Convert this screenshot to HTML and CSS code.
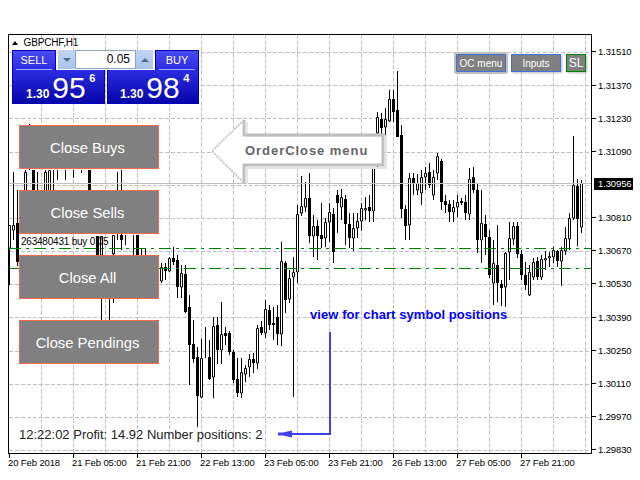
FILE: index.html
```html
<!DOCTYPE html>
<html lang="en">
<head>
<meta charset="utf-8">
<title>GBPCHF,H1</title>
<link rel="stylesheet" href="styles.css">
</head>
<body>
<div class="page">
  <div class="chart-row">
    <div class="plot">
      <svg class="chart" width="582" height="418" viewBox="9 35 582 418">
        <path class="grid" d="M9 52.5H591M9 85.5H591M9 118.5H591M9 152.5H591M9 185.5H591M9 218.5H591M9 251.5H591M9 284.5H591M9 317.5H591M9 351.5H591M9 384.5H591M9 417.5H591M9 450.5H591M41.5 35V453M73.5 35V453M105.5 35V453M137.5 35V453M169.5 35V453M201.5 35V453M233.5 35V453M265.5 35V453M297.5 35V453M329.5 35V453M361.5 35V453M393.5 35V453M425.5 35V453M457.5 35V453M489.5 35V453M521.5 35V453M553.5 35V453M585.5 35V453"/>
        <path class="wick" d="M9.5 225V285M13.5 172V240M17.5 190V266M25.5 170V205M29.5 124V170M33.5 170V200M37.5 172V195M45.5 170V205M49.5 170V205M53.5 170V195M57.5 170V180M65.5 170V180M73.5 170V178M81.5 170V173M89.5 170V200M97.5 240V256M101.5 240V320M109.5 255V320M113.5 235V303M117.5 172V240M121.5 170V250M125.5 235V245M133.5 235V256M137.5 235V256M141.5 249V256M145.5 248V256M161.5 263V283M165.5 263V280M169.5 257V272M173.5 247V265M177.5 255V298M181.5 265V298M185.5 265V313M189.5 295V385M193.5 320V363M197.5 347V427M201.5 339V398M205.5 327V358M209.5 340V380M213.5 317V398M217.5 317V364M221.5 302V364M225.5 327V345M229.5 331V355M233.5 350V383M237.5 358V397M241.5 358V398M245.5 365V382M249.5 354V377M253.5 353V373M257.5 325V369M261.5 321V335M265.5 300V338M269.5 305V330M273.5 307V340M277.5 305V345M281.5 242V346M285.5 261V313M289.5 270V303M293.5 257V397M297.5 205V283M301.5 176V216M305.5 182V212M309.5 173V243M313.5 215V257M317.5 220V260M321.5 203V248M325.5 218V247M329.5 203V242M333.5 208V263M337.5 190V233M341.5 189V220M345.5 195V245M349.5 213V248M353.5 213V251M357.5 213V238M361.5 203V231M365.5 197V220M369.5 195V222M373.5 167V222M377.5 112V168M381.5 113V140M385.5 108V143M389.5 90V122M393.5 90V122M397.5 71V137M401.5 125V218M405.5 205V240M409.5 173V240M413.5 173V195M417.5 174V195M421.5 170V205M425.5 167V190M429.5 163V188M433.5 170V200M437.5 153V180M441.5 159V210M445.5 195V213M449.5 200V222M453.5 200V222M457.5 195V217M461.5 198V205M465.5 195V220M469.5 168V220M473.5 167V193M477.5 184V253M481.5 190V263M485.5 215V255M489.5 230V278M493.5 240V305M497.5 225V302M501.5 280V306M505.5 252V307M509.5 222V280M513.5 222V245M517.5 222V258M521.5 250V280M525.5 262V290M529.5 265V296M533.5 258V280M537.5 257V280M541.5 255V280M545.5 251V270M549.5 252V267M553.5 247V263M557.5 250V267M561.5 247V286M565.5 227V255M569.5 213V250M573.5 136V220M577.5 179V246M581.5 180V233"/>
        <path class="body-black" d="M17.5 223V262M33.5 170V195M89.5 170V190M97.5 236V255M121.5 235V240M137.5 235V255M165.5 267V271M173.5 258V262M177.5 260V287M185.5 274V312M189.5 307V345M193.5 344V359M197.5 357V396M209.5 357V379M217.5 325V350M225.5 333V336M229.5 333V352M233.5 352V380M237.5 379V393M253.5 359V363M261.5 327V333M269.5 310V325M273.5 323V325M277.5 317V334M285.5 263V300M309.5 198V236M317.5 226V236M321.5 235V239M333.5 214V252M337.5 195V203M345.5 199V224M349.5 224V238M369.5 207V211M381.5 119V128M393.5 99V112M397.5 110V137M401.5 135V209M405.5 209V226M413.5 178V183M429.5 172V185M441.5 161V202M445.5 201V205M449.5 204V212M461.5 201V203M465.5 202V213M473.5 177V190M477.5 190V240M485.5 224V237M489.5 237V275M497.5 265V283M501.5 284V288M517.5 226V254M521.5 254V275M525.5 275V285M537.5 261V277M557.5 251V261M577.5 186V219"/>
        <path class="body-white" d="M8.5 225.5h2V248h-2zM12.5 225.5h2V230h-2zM24.5 172.5h2V200h-2zM44.5 172.5h2V200h-2zM48.5 170.5h2V200h-2zM100.5 236.5h2V255h-2zM112.5 235.5h2V254h-2zM160.5 267.5h2V281h-2zM168.5 258.5h2V271h-2zM180.5 273.5h2V287h-2zM200.5 358.5h2V397h-2zM212.5 326.5h2V377h-2zM220.5 334.5h2V350h-2zM240.5 372.5h2V393h-2zM244.5 368.5h2V374h-2zM248.5 359.5h2V367h-2zM256.5 328.5h2V363h-2zM264.5 309.5h2V333h-2zM280.5 261.5h2V334h-2zM288.5 278.5h2V299h-2zM292.5 272.5h2V277h-2zM296.5 214.5h2V272h-2zM300.5 206.5h2V213h-2zM304.5 198.5h2V207h-2zM312.5 226.5h2V236h-2zM324.5 222.5h2V238h-2zM328.5 212.5h2V222h-2zM340.5 197.5h2V207h-2zM352.5 228.5h2V238h-2zM356.5 221.5h2V228h-2zM360.5 208.5h2V221h-2zM364.5 208.5h2V210h-2zM372.5 167.5h2V211h-2zM376.5 117.5h2V133h-2zM384.5 119.5h2V127h-2zM388.5 99.5h2V121h-2zM408.5 178.5h2V225h-2zM416.5 183.5h2V190h-2zM420.5 177.5h2V193h-2zM424.5 173.5h2V177h-2zM432.5 177.5h2V195h-2zM436.5 156.5h2V173h-2zM452.5 207.5h2V212h-2zM456.5 202.5h2V207h-2zM468.5 179.5h2V214h-2zM480.5 223.5h2V240h-2zM492.5 263.5h2V283h-2zM504.5 253.5h2V287h-2zM508.5 238.5h2V252h-2zM512.5 226.5h2V239h-2zM528.5 272.5h2V295h-2zM532.5 262.5h2V277h-2zM540.5 259.5h2V277h-2zM544.5 258.5h2V260h-2zM548.5 256.5h2V258h-2zM552.5 250.5h2V257h-2zM560.5 250.5h2V261h-2zM564.5 238.5h2V251h-2zM568.5 218.5h2V239h-2zM572.5 185.5h2V218h-2zM580.5 183.5h2V227h-2z"/>
        <path class="bid" d="M9 183.5H591"/>
        <path class="order-line" d="M9 248.5H591M9 268.5H591"/>
        <path class="blue-stem" d="M330 332V434H292"/>
        <path class="blue-head" d="M292 430.5V437.5L283 435.5H278V432.5H283Z"/>
      </svg>

      <div class="symbol"><span class="symbol-mark"></span>GBPCHF,H1</div>

      <div class="trade-panel">
        <div class="trade-top">
          <button class="trade-btn">SELL</button>
          <div class="spinner">
            <span class="spin-btn"><span class="tri-down"></span></span>
            <span class="spin-value">0.05</span>
            <span class="spin-btn"><span class="tri-up"></span></span>
          </div>
          <button class="trade-btn">BUY</button>
        </div>
        <div class="trade-quotes">
          <div class="quote"><span class="q-small">1.30</span><span class="q-big">95</span><span class="q-sup">6</span></div>
          <div class="quote"><span class="q-small">1.30</span><span class="q-big">98</span><span class="q-sup">4</span></div>
        </div>
      </div>

      <div class="close-menu">
        <div class="close-btn">Close Buys</div>
        <div class="close-btn">Close Sells</div>
        <div class="close-btn">Close All</div>
        <div class="close-btn">Close Pendings</div>
      </div>

      <div class="order-label">263480431 buy 0.05</div>

      <div class="callout">
        <svg class="callout-shape" width="180" height="72" viewBox="209 116 180 72">
          <path class="callout-fill" d="M244 120L212 151L244 183V165H383V135H244Z"/>
          <path class="callout-diag" d="M244 120L212 151L244 183"/>
          <path class="callout-shadow" d="M247 122V136H386V168H247V184"/>
          <path class="callout-edge" d="M244 120V135H383V165H244V183"/>
        </svg>
        <span class="callout-text">OrderClose menu</span>
      </div>

      <div class="tool-row">
        <div class="tool-btn tool-active">OC menu</div>
        <div class="tool-btn">Inputs</div>
        <div class="tool-btn tool-sl">SL</div>
      </div>

      <div class="note">view for chart symbol positions</div>
      <div class="status">12:22:02 Profit: 14.92 Number positions: 2</div>
    </div>

    <div class="price-axis">
      <div class="price">1.31510</div>
      <div class="price">1.31370</div>
      <div class="price">1.31230</div>
      <div class="price">1.31090</div>
      <div class="price price-now">1.30956</div>
      <div class="price">1.30810</div>
      <div class="price">1.30670</div>
      <div class="price">1.30530</div>
      <div class="price">1.30390</div>
      <div class="price">1.30250</div>
      <div class="price">1.30110</div>
      <div class="price">1.29970</div>
      <div class="price">1.29830</div>
    </div>
  </div>

  <div class="time-axis">
    <div class="time">20 Feb 2018</div>
    <div class="time">21 Feb 05:00</div>
    <div class="time">21 Feb 21:00</div>
    <div class="time">22 Feb 13:00</div>
    <div class="time">23 Feb 05:00</div>
    <div class="time">23 Feb 21:00</div>
    <div class="time">26 Feb 13:00</div>
    <div class="time">27 Feb 05:00</div>
    <div class="time">27 Feb 21:00</div>
  </div>
</div>
</body>
</html>
```
FILE: styles.css
```css
* { box-sizing: border-box; }
html, body { margin: 0; padding: 0; background: #fff; }
.page {
  width: 640px;
  height: 480px;
  padding: 34px 0 0 8px;
  overflow: hidden;
  font-family: "Liberation Sans", Arial, sans-serif;
  color: #000;
}
.chart-row { display: flex; height: 420px; }
.plot {
  position: relative;
  width: 584px;
  height: 420px;
  border: 1px solid #000;
  flex: none;
}
.chart { display: block; }
.grid { fill: none; stroke: #c0c0c0; stroke-width: 1; stroke-dasharray: 4 2; }
.wick { fill: none; stroke: #000; stroke-width: 1; }
.body-black { fill: none; stroke: #000; stroke-width: 3; }
.body-white { fill: #fff; stroke: #000; stroke-width: 1; }
.bid { stroke: #c0c0c0; stroke-width: 1; }
.order-line { stroke: #008000; stroke-width: 1; stroke-dasharray: 12 5 3 5; }
.blue-stem { fill: none; stroke: #4040f0; stroke-width: 2; }
.blue-head { fill: #4040f0; }

.symbol {
  position: absolute;
  left: 3px;
  top: 1px;
  display: flex;
  align-items: center;
  height: 13px;
  font-size: 10px;
  letter-spacing: -.15px;
}
.symbol-mark {
  width: 0;
  height: 0;
  margin-right: 5.5px;
  border-left: 3.5px solid transparent;
  border-right: 3.5px solid transparent;
  border-bottom: 4px solid #000;
}

.trade-panel { position: absolute; left: 3px; top: 15px; width: 187px; }
.trade-top { display: flex; height: 20px; justify-content: space-between; }
.trade-btn {
  width: 44px;
  height: 20px;
  padding: 0 0 1px;
  border: 1px solid #0000b8;
  border-bottom: 0;
  background: linear-gradient(#4a4af2, #2c2ce4);
  color: #fff;
  font: 11px "Liberation Sans", Arial, sans-serif;
  position: relative;
}
.trade-btn::after {
  content: "";
  position: absolute;
  left: 3px;
  right: 3px;
  bottom: 0;
  height: 1px;
  background: #a8a8ff;
}
.spinner { display: flex; width: 95px; height: 19px; }
.spin-btn {
  display: flex;
  width: 17px;
  align-items: center;
  justify-content: center;
  background: linear-gradient(#c2d4f4, #a8c2ec);
}
.tri-down, .tri-up {
  width: 0;
  height: 0;
  border-left: 4px solid transparent;
  border-right: 4px solid transparent;
}
.tri-down { border-top: 4px solid #4a6a90; }
.tri-up { border-bottom: 4px solid #4a6a90; }
.spin-value {
  width: 61px;
  padding-right: 5px;
  border: 1px solid #8aa5c4;
  background: #fff;
  text-align: right;
  font-size: 12px;
  line-height: 17px;
}
.trade-quotes { display: flex; justify-content: space-between; height: 34px; }
.quote {
  display: flex;
  align-items: baseline;
  width: 93px;
  height: 34px;
  padding: 2.6px 0 0 13px;
  border: 1px solid #0000b8;
  border-top: 0;
  background: linear-gradient(#2c2ce4, #0505a8);
  color: #fff;
}
.quote + .quote { width: 92px; padding-left: 12px; }
.q-small { font-size: 12px; font-weight: 700; }
.q-big { margin-left: 3px; font-size: 30px; line-height: 30px; }
.q-sup {
  align-self: flex-start;
  margin-left: 3.5px;
  font-size: 11px;
  line-height: 11px;
  font-weight: 700;
}

.close-menu {
  position: absolute;
  left: 10px;
  top: 90px;
  display: flex;
  flex-direction: column;
  gap: 21px;
}
.close-btn {
  display: flex;
  width: 140px;
  height: 44px;
  padding: 2px 3px 0 0;
  align-items: center;
  justify-content: center;
  border: 1px solid #f4694e;
  background: #808080;
  color: #fff;
  font-size: 14.8px;
}
.order-label {
  position: absolute;
  left: 12px;
  top: 201px;
  font-size: 10px;
  letter-spacing: -.22px;
  line-height: 12px;
}

.callout { position: absolute; left: 200px; top: 81px; width: 180px; height: 72px; }
.callout-shape { display: block; }
.callout-fill { fill: #fff; }
.callout-diag { fill: none; stroke: #c8c8c8; stroke-width: 2; stroke-dasharray: 2 1; }
.callout-shadow { fill: none; stroke: #e4e4e4; stroke-width: 2; }
.callout-edge { fill: none; stroke: #c0c0c0; stroke-width: 3; }
.callout-text {
  position: absolute;
  left: 36px;
  top: 27px;
  color: #666;
  font-size: 13px;
  line-height: 16px;
  font-weight: 700;
  letter-spacing: .95px;
  white-space: nowrap;
}

.tool-row {
  position: absolute;
  right: 5px;
  top: 19px;
  display: flex;
  gap: 5px;
}
.tool-btn {
  display: flex;
  width: 50px;
  height: 18px;
  align-items: center;
  justify-content: center;
  border: 1px solid #4070e0;
  background: #808080;
  color: #fff;
  font-size: 10px;
  box-shadow: 1px 1px 2px #bbb;
}
.tool-active { box-shadow: 0 0 0 2px #c0c0c0; border-radius: 1px; }
.tool-sl {
  width: 20px;
  border: 1px solid #008000;
  font-size: 12px;
}

.note {
  position: absolute;
  left: 301px;
  top: 272px;
  color: #0000ff;
  font-size: 13px;
  line-height: 16px;
  font-weight: 700;
  letter-spacing: .07px;
  white-space: nowrap;
}
.status {
  position: absolute;
  left: 10px;
  top: 392px;
  color: #222;
  font-size: 13px;
  line-height: 16px;
  white-space: nowrap;
}

.price-axis {
  display: flex;
  flex-direction: column;
  padding-top: 1.4px;
  flex: none;
  width: 48px;
}
.price {
  position: relative;
  height: 33.17px;
  padding-left: 6px;
  line-height: 33.17px;
  font-size: 9.5px;
  letter-spacing: -.12px;
}
.price::before {
  content: "";
  position: absolute;
  left: 0;
  top: 16px;
  width: 4px;
  height: 1px;
  background: #000;
}
.price-now {
  color: #fff;
  line-height: 12px;
  height: 12px;
  margin: 9.5px 0 11.67px 2px;
  padding-left: 4px;
  background: #000;
  width: 39px;
}
.price-now::before { display: none; }

.time-axis { display: flex; height: 26px; }
.time {
  position: relative;
  width: 64px;
  flex: none;
  padding-top: 3px;
  font-size: 9.5px;
  line-height: 12px;
  letter-spacing: -.12px;
  white-space: nowrap;
}
.time::before {
  content: "";
  position: absolute;
  left: 1px;
  top: 0;
  width: 1px;
  height: 4px;
  background: #000;
}
```
